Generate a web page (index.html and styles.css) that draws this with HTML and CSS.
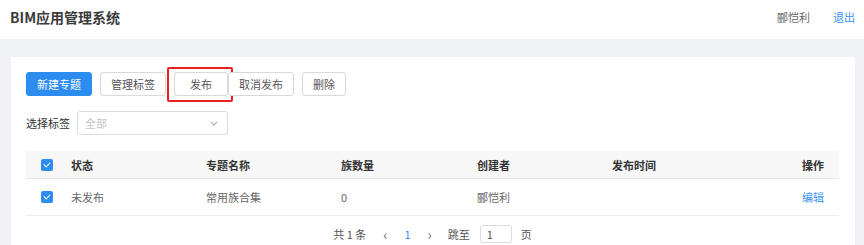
FILE: index.html
```html
<!DOCTYPE html>
<html lang="zh-CN">
<head>
    <meta charset="UTF-8">
    <meta name="viewport" content="width=device-width, initial-scale=1.0">
    <title>BIM应用管理系统</title>
    <link rel="stylesheet" href="styles.css">
</head>
<body>

    <header class="topbar">
        <h1 class="app-title">BIM应用管理系统</h1>
        <div class="user-area">
            <span class="user-name">郦恺利</span>
            <a class="logout" href="#">退出</a>
        </div>
    </header>

    <main class="main">
        <section class="panel">
            <div class="toolbar">
                <button class="btn btn-primary">新建专题</button>
                <button class="btn">管理标签</button>
                <button class="btn btn-wide">发布<span class="mark-box"></span></button>
                <button class="btn btn-join">取消发布</button>
                <button class="btn">删除</button>
            </div>

            <div class="filter-row">
                <span class="filter-label">选择标签</span>
                <div class="select">
                    <span class="placeholder">全部</span>
                    <svg class="chevron" width="8" height="5" viewBox="0 0 8 5"><path d="M0.8 0.8 L4 4 L7.2 0.8" fill="none" stroke="#aaa" stroke-width="1.1"/></svg>
                </div>
            </div>

            <div class="table">
                <div class="table-row table-head">
                    <div class="cell cell-check"><span class="checkbox"></span></div>
                    <div class="cell">状态</div>
                    <div class="cell">专题名称</div>
                    <div class="cell">族数量</div>
                    <div class="cell">创建者</div>
                    <div class="cell">发布时间</div>
                    <div class="cell cell-action">操作</div>
                </div>
                <div class="table-row">
                    <div class="cell cell-check"><span class="checkbox"></span></div>
                    <div class="cell">未发布</div>
                    <div class="cell">常用族合集</div>
                    <div class="cell">0</div>
                    <div class="cell">郦恺利</div>
                    <div class="cell"></div>
                    <div class="cell cell-action"><a class="link" href="#">编辑</a></div>
                </div>
            </div>

            <div class="pager">
                <span class="pager-total">共&nbsp;1&nbsp;条</span>
                <span class="pager-arrow">&lsaquo;</span>
                <span class="pager-page">1</span>
                <span class="pager-arrow">&rsaquo;</span>
                <span class="pager-jump">跳至</span>
                <span class="pager-input">1</span>
                <span class="pager-unit">页</span>
            </div>
        </section>
    </main>

</body>
</html>
```

FILE: styles.css
```css
/* Base */
body {
    margin: 0;
    font-family: "Noto Sans CJK SC", "Noto Sans", sans-serif;
    font-size: 11px;
    color: #555;
    background: #f0f2f5;
}

a {
    text-decoration: none;
}

/* Top bar */
.topbar {
    display: flex;
    justify-content: space-between;
    align-items: center;
    height: 39px;
    padding: 0 9px 6px 10px;
    box-sizing: border-box;
    background: white;
}

.app-title {
    margin: 0;
    font-size: 14px;
    font-weight: bold;
    color: #3a3a3a;
}

.user-area {
    display: flex;
    align-items: center;
    gap: 23px;
}

.user-name {
    color: #666;
}

.logout {
    color: #3a94f2;
}

/* Main */
.main {
    padding: 18px 9px 0 11px;
}

.panel {
    background: white;
    padding: 15px 16px 10px 15px;
    height: 200px;
    box-sizing: border-box;
}

/* Toolbar */
.toolbar {
    display: flex;
    gap: 8px;
}

.btn {
    position: relative;
    height: 24px;
    padding: 0 10px;
    border: 1px solid #d9d9d9;
    border-radius: 3px;
    background: white;
    color: #555;
    font-family: inherit;
    font-size: 11px;
    cursor: pointer;
}

.btn-primary {
    background: #2d8cf0;
    border-color: #2d8cf0;
    color: white;
}

.btn-wide {
    width: 54px;
}

.btn-join {
    margin-left: -8px;
}

.mark-box {
    position: absolute;
    left: -8px;
    top: -6px;
    width: 62px;
    height: 31px;
    border: 2px solid #e82020;
    border-radius: 2px;
}

/* Filter */
.filter-row {
    display: flex;
    align-items: center;
    gap: 7px;
    margin-top: 15px;
}

.filter-label {
    color: #333;
}

.select {
    display: flex;
    align-items: center;
    justify-content: space-between;
    width: 151px;
    height: 24px;
    padding: 0 9px 0 7px;
    box-sizing: border-box;
    border: 1px solid #dcdcdc;
    border-radius: 3px;
}

.placeholder {
    color: #c4c4c4;
}

/* Table */
.table {
    margin-top: 16px;
}

.table-row {
    display: grid;
    grid-template-columns: 45px 135px 135px 136px 135px 135px 92px;
    height: 36px;
    align-items: center;
    border-bottom: 1px solid #ececec;
    color: #666;
}

.table-head {
    height: 27px;
    background: #f7f7f7;
    border-bottom-color: #e6e6e6;
    color: #333;
    font-weight: bold;
}

.cell-check {
    padding-left: 15px;
    display: flex;
}

.cell-action {
    text-align: right;
    padding-right: 15px;
}

.checkbox {
    position: relative;
    width: 12px;
    height: 12px;
    border-radius: 2px;
    background: #2d8cf0;
}

.checkbox::after {
    content: "";
    position: absolute;
    left: 4px;
    top: 2px;
    width: 3px;
    height: 5px;
    border: solid white;
    border-width: 0 1.5px 1.5px 0;
    transform: rotate(45deg);
}

.link {
    color: #3a94f2;
}

/* Pager */
.pager {
    display: flex;
    justify-content: center;
    align-items: center;
    margin-top: 9px;
    height: 18px;
    color: #555;
}

.pager-total {
    margin-right: 17px;
}

.pager-arrow {
    font-size: 14px;
    color: #666;
}

.pager-page {
    margin: 0 17px;
    color: #2d8cf0;
}

.pager-jump {
    margin-left: 16px;
}

.pager-input {
    width: 32px;
    height: 18px;
    margin: 0 9px 0 10px;
    padding-left: 6px;
    box-sizing: border-box;
    border: 1px solid #dcdcdc;
    border-radius: 3px;
    line-height: 16px;
}
```
